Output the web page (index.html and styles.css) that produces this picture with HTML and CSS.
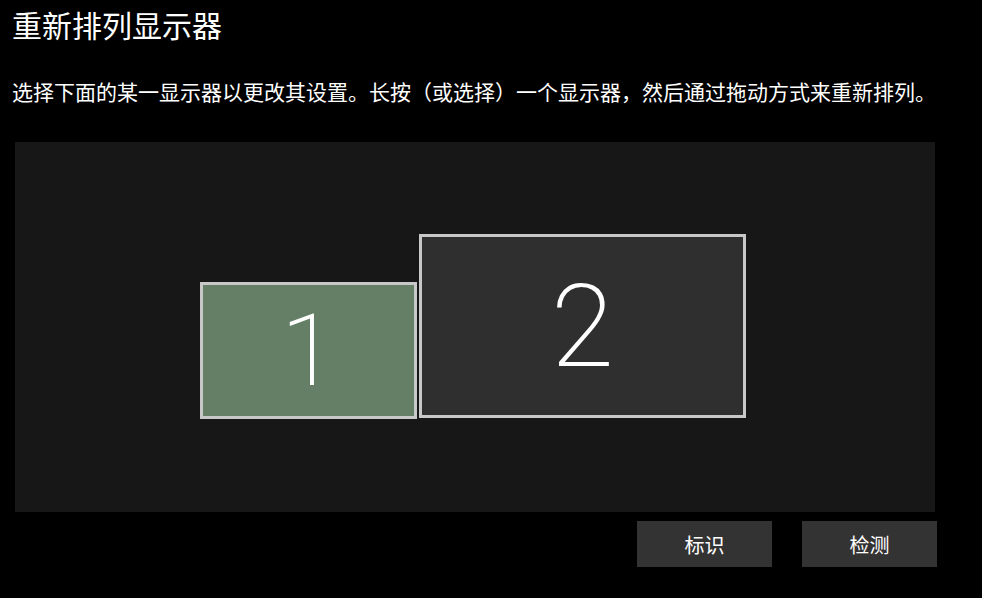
FILE: index.html
```html
<!DOCTYPE html>
<html lang="zh-CN">
<head>
<meta charset="utf-8">
<title>重新排列显示器</title>
<link rel="stylesheet" href="styles.css">
</head>
<body>
<main class="page">
  <h1 class="title">重新排列显示器</h1>
  <p class="desc">选择下面的某一显示器以更改其设置。长按（或选择）一个显示器，然后通过拖动方式来重新排列。</p>
  <section class="canvas">
    <div class="monitor monitor-1 selected"><span class="num num-1">1</span></div>
    <div class="monitor monitor-2"><span class="num num-2">2</span></div>
  </section>
  <div class="actions">
    <button class="btn">标识</button>
    <button class="btn">检测</button>
  </div>
</main>
</body>
</html>
```

FILE: styles.css
```css
html, body {
  margin: 0;
  padding: 0;
  background: #000;
  height: 100%;
}
body {
  font-family: "Noto Sans CJK SC", "Noto Sans", sans-serif;
  color: #fff;
  overflow: hidden;
}
.page {
  padding-left: 12px;
  width: 925px;
}
.title {
  margin: 4px 0 0;
  font-size: 30px;
  line-height: 40px;
  font-weight: 400;
}
.desc {
  margin: 32px 0 0;
  font-size: 21px;
  line-height: 30px;
  font-weight: 400;
  white-space: nowrap;
}
.canvas {
  position: relative;
  margin: 36px 0 0 3px;
  width: 920px;
  height: 370px;
  background: #171717;
}
.monitor {
  position: absolute;
  box-sizing: border-box;
  border: 3px solid #c8c8c8;
  background: #2f2f2f;
  display: flex;
  align-items: center;
  justify-content: center;
}
.monitor-1 {
  left: 185px;
  top: 140px;
  width: 217px;
  height: 137px;
}
.monitor-1.selected {
  background: #647f66;
}
.monitor-2 {
  left: 404px;
  top: 92px;
  width: 327px;
  height: 184px;
}
.num {
  font-family: "Segoe UI", Roboto, "Open Sans", sans-serif;
  font-weight: 200;
  line-height: 1;
  color: #fff;
}
.num-1 {
  font-size: 101px;
}
.num-2 {
  font-size: 115px;
}
.actions {
  display: flex;
  justify-content: flex-end;
  gap: 30px;
  margin-top: 9px;
}
.btn {
  width: 135px;
  height: 46px;
  border: none;
  background: #333;
  color: #fff;
  font-family: "Noto Sans CJK SC", "Noto Sans", sans-serif;
  font-size: 20px;
  padding: 0;
}
```
